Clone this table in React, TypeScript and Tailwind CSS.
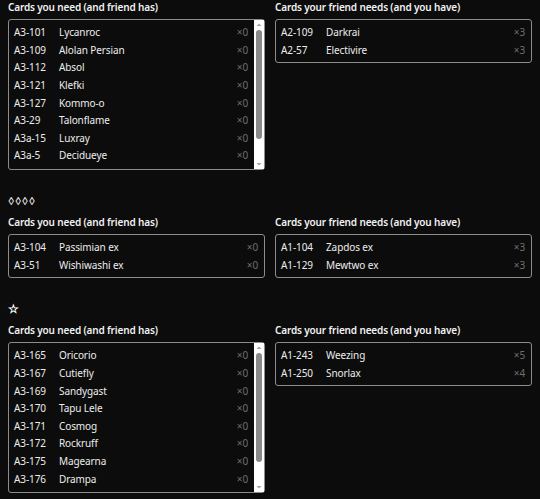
import React from 'react';

type Card = { code: string; name: string; count: number };

interface SectionData {
  icon?: string;
  scroll?: boolean;
  need: Card[];
  give: Card[];
}

const sections: SectionData[] = [
  {
    scroll: true,
    need: [
      { code: 'A3-101', name: 'Lycanroc', count: 0 },
      { code: 'A3-109', name: 'Alolan Persian', count: 0 },
      { code: 'A3-112', name: 'Absol', count: 0 },
      { code: 'A3-121', name: 'Klefki', count: 0 },
      { code: 'A3-127', name: 'Kommo-o', count: 0 },
      { code: 'A3-29', name: 'Talonflame', count: 0 },
      { code: 'A3a-15', name: 'Luxray', count: 0 },
      { code: 'A3a-5', name: 'Decidueye', count: 0 },
    ],
    give: [
      { code: 'A2-109', name: 'Darkrai', count: 3 },
      { code: 'A2-57', name: 'Electivire', count: 3 },
    ],
  },
  {
    icon: '◊◊◊◊',
    need: [
      { code: 'A3-104', name: 'Passimian ex', count: 0 },
      { code: 'A3-51', name: 'Wishiwashi ex', count: 0 },
    ],
    give: [
      { code: 'A1-104', name: 'Zapdos ex', count: 3 },
      { code: 'A1-129', name: 'Mewtwo ex', count: 3 },
    ],
  },
  {
    icon: '☆',
    scroll: true,
    need: [
      { code: 'A3-165', name: 'Oricorio', count: 0 },
      { code: 'A3-167', name: 'Cutiefly', count: 0 },
      { code: 'A3-169', name: 'Sandygast', count: 0 },
      { code: 'A3-170', name: 'Tapu Lele', count: 0 },
      { code: 'A3-171', name: 'Cosmog', count: 0 },
      { code: 'A3-172', name: 'Rockruff', count: 0 },
      { code: 'A3-175', name: 'Magearna', count: 0 },
      { code: 'A3-176', name: 'Drampa', count: 0 },
    ],
    give: [
      { code: 'A1-243', name: 'Weezing', count: 5 },
      { code: 'A1-250', name: 'Snorlax', count: 4 },
    ],
  },
];

const Scrollbar: React.FC = () => (
  <div className="w-[10px] shrink-0 bg-white flex flex-col items-center">
    <svg width="10" height="10" viewBox="0 0 10 10" className="shrink-0">
      <path d="M2.5 6 L5 3.5 L7.5 6 Z" fill="#a3a3a3" />
    </svg>
    <div className="flex-1 w-full px-[2px] pb-[20px]">
      <div className="h-full w-full rounded-full bg-[#8a8a8a]" />
    </div>
    <svg width="10" height="10" viewBox="0 0 10 10" className="shrink-0">
      <path d="M2.5 4 L5 6.5 L7.5 4 Z" fill="#a3a3a3" />
    </svg>
  </div>
);

const CardList: React.FC<{ title: string; cards: Card[]; scroll?: boolean }> = ({
  title,
  cards,
  scroll,
}) => (
  <div className="flex flex-col">
    <h3 className="text-[10px] leading-[14px] font-semibold tracking-[-0.15px] text-[#f2f2f2] mb-[5px]">
      {title}
    </h3>
    <div className={`flex border border-[#8c8c8c] rounded-[3px] ${scroll ? 'h-[151px]' : ''}`}>
      <ul className="flex-1 pt-[4px] pb-[3px] pl-[5px] pr-[6px]">
        {cards.map((c) => (
          <li key={c.code} className="flex items-center h-[17.6px] text-[10px] tracking-[-0.1px]">
            <span className="w-[45px] shrink-0 text-[#ececec]">{c.code}</span>
            <span className="flex-1 text-[#ececec]">{c.name}</span>
            <span className="text-[#6f6f6f]">×{c.count}</span>
          </li>
        ))}
      </ul>
      {scroll && <Scrollbar />}
    </div>
  </div>
);

export default function App() {
  return (
    <div
      className="min-h-[499px] bg-[#0c0c0c] px-[8px] pb-4"
      style={{ fontFamily: '"Noto Sans", "Open Sans", sans-serif' }}
    >
      {sections.map((s, i) => (
        <section key={i} className={i > 0 ? 'mt-[24px]' : ''}>
          {s.icon && (
            <div
              className={`h-[14px] leading-[14px] text-white mb-[7px] ${
                s.icon === '☆' ? 'text-[12px] font-bold' : 'text-[11px] tracking-[0.5px]'
              }`}
            >
              {s.icon}
            </div>
          )}
          <div className="grid grid-cols-2 gap-[10px] items-start">
            <CardList title="Cards you need (and friend has)" cards={s.need} scroll={s.scroll} />
            <CardList title="Cards your friend needs (and you have)" cards={s.give} />
          </div>
        </section>
      ))}
    </div>
  );
}
